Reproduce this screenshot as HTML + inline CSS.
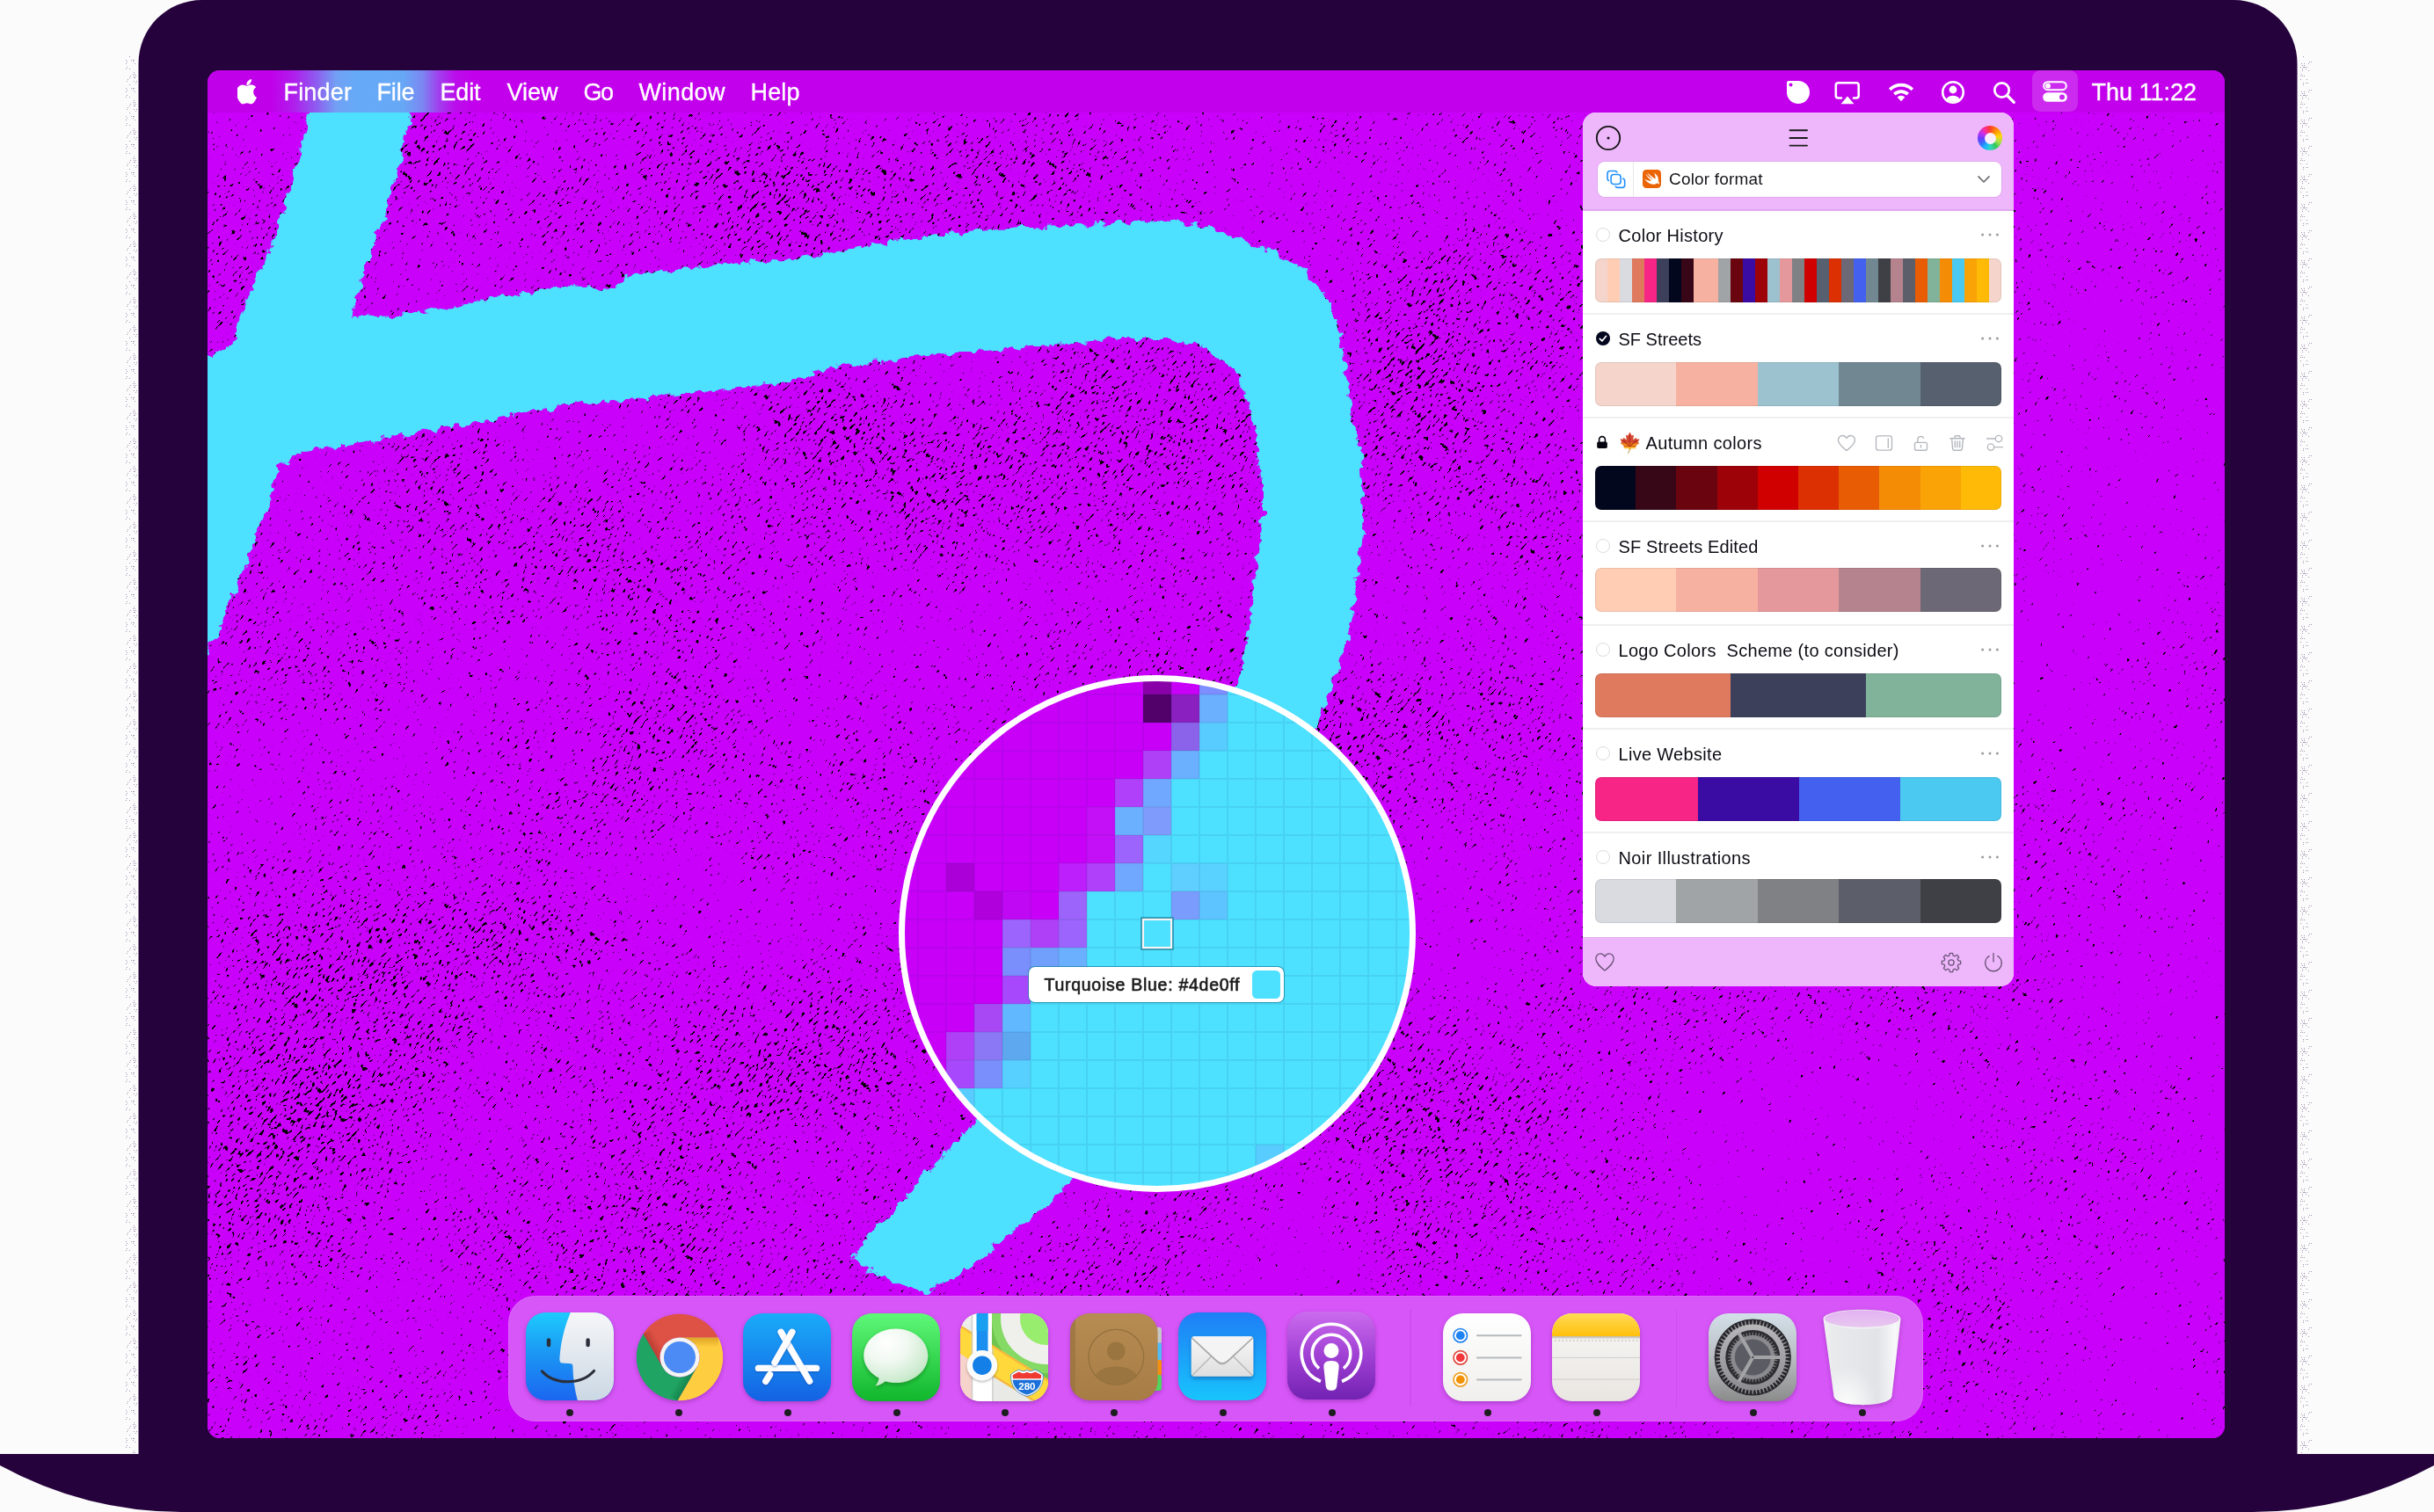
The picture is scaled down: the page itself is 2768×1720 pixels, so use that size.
<!DOCTYPE html>
<html lang="en"><head><meta charset="utf-8"><title>Color picker desktop</title>
<style>
*{box-sizing:border-box}
html,body{margin:0;padding:0}
body{width:2768px;height:1720px;position:relative;overflow:hidden;background:#fbfbfc;font-family:"Liberation Sans",sans-serif;}
.abs{position:absolute}
#screen{position:absolute;left:236px;top:80px;width:2294px;height:1556px;border-radius:14px;overflow:hidden;background:#c900fa}
#in{position:absolute;left:-236px;top:-80px;width:2768px;height:1720px;will-change:transform}
.mi{top:90px;height:30px;line-height:30px;font-size:27px;color:#fff;white-space:nowrap;-webkit-text-stroke:0.300px #fff}
.bar{border-radius:7px;box-shadow:inset 0 0 0 1px rgba(0,0,0,0.08)}
.tt{height:24px;line-height:24px;font-size:20px;color:#0c0c14;white-space:nowrap}
.ic{overflow:visible;filter:drop-shadow(0 2px 2.500px rgba(60,0,90,0.280))}
</style></head><body>
<svg class="abs" style="left:0;top:0" width="2768" height="1720" viewBox="0 0 2768 1720"><path fill="#26023c" d="M157.5,1654 L157.5,72 A72,72 0 0 1 229.5,0 L2540.5,0 A72,72 0 0 1 2612.5,72 L2612.5,1654 L2768,1654 L2768,1667 A435,435 0 0 1 2558,1720 L210,1720 A435,435 0 0 1 0,1667 L0,1654 Z"/></svg>
<svg class="abs" style="left:0;top:0" width="2768" height="1720" viewBox="0 0 2768 1720"><defs><pattern id="dl" x="140" y="0" width="16" height="32" patternUnits="userSpaceOnUse"><g fill="#a898b2"><rect x="3" y="4" width="1" height="1"/><rect x="3" y="8" width="1" height="1"/><rect x="3" y="14" width="1" height="1"/><rect x="4" y="6" width="1" height="1"/><rect x="4" y="12" width="1" height="1"/><rect x="4" y="28" width="1" height="1"/><rect x="5" y="26" width="1" height="1"/><rect x="7" y="0" width="1" height="1"/><rect x="7" y="14" width="1" height="1"/><rect x="7" y="24" width="1" height="1"/><rect x="8" y="22" width="1" height="1"/><rect x="9" y="4" width="1" height="1"/><rect x="11" y="4" width="1" height="1"/><rect x="11" y="6" width="1" height="1"/><rect x="11" y="20" width="1" height="1"/><rect x="12" y="4" width="1" height="1"/><rect x="12" y="18" width="1" height="1"/><rect x="12" y="22" width="1" height="1"/><rect x="12" y="24" width="1" height="1"/><rect x="12" y="28" width="1" height="1"/><rect x="13" y="8" width="1" height="1"/><rect x="13" y="20" width="1" height="1"/><rect x="13" y="24" width="1" height="1"/><rect x="14" y="22" width="1" height="1"/><rect x="14" y="30" width="1" height="1"/><rect x="15" y="28" width="1" height="1"/></g></pattern><pattern id="dr" x="2615" y="0" width="16" height="32" patternUnits="userSpaceOnUse"><g fill="#a898b2"><rect x="13" y="6" width="1" height="1"/><rect x="11" y="6" width="1" height="1"/><rect x="10" y="8" width="1" height="1"/><rect x="10" y="16" width="1" height="1"/><rect x="9" y="30" width="1" height="1"/><rect x="8" y="12" width="1" height="1"/><rect x="8" y="26" width="1" height="1"/><rect x="7" y="14" width="1" height="1"/><rect x="7" y="30" width="1" height="1"/><rect x="6" y="12" width="1" height="1"/><rect x="5" y="8" width="1" height="1"/><rect x="5" y="10" width="1" height="1"/><rect x="5" y="12" width="1" height="1"/><rect x="5" y="22" width="1" height="1"/><rect x="4" y="0" width="1" height="1"/><rect x="4" y="12" width="1" height="1"/><rect x="4" y="30" width="1" height="1"/><rect x="3" y="10" width="1" height="1"/><rect x="3" y="14" width="1" height="1"/><rect x="3" y="16" width="1" height="1"/><rect x="3" y="22" width="1" height="1"/><rect x="2" y="8" width="1" height="1"/><rect x="2" y="20" width="1" height="1"/><rect x="1" y="12" width="1" height="1"/><rect x="1" y="22" width="1" height="1"/><rect x="1" y="26" width="1" height="1"/></g></pattern></defs><rect x="140" y="64" width="16" height="1590" fill="url(#dl)"/><rect x="2615" y="64" width="16" height="1590" fill="url(#dr)"/></svg>
<div id="screen"><div id="in">

<svg class="wall" viewBox="236 80 2294 1556" width="2294" height="1556" style="position:absolute;left:236px;top:80px">
<defs>
<filter id="rough" x="-5%" y="-5%" width="110%" height="110%" filterUnits="objectBoundingBox">
<feTurbulence type="fractalNoise" baseFrequency="0.09" numOctaves="3" seed="4" result="n"/>
<feDisplacementMap in="SourceGraphic" in2="n" scale="14" xChannelSelector="R" yChannelSelector="G"/>
</filter>
<filter id="speck" x="-100" y="-700" width="2966" height="3116" filterUnits="userSpaceOnUse" color-interpolation-filters="sRGB">
<feTurbulence type="fractalNoise" baseFrequency="0.15 0.34" numOctaves="2" seed="11" result="t"/>
<feColorMatrix in="t" type="matrix" values="1 0 0 0 0  0 0 0 0 0  0 0 0 0 0  0 0 0 0 1" result="hi"/>
<feTurbulence type="fractalNoise" baseFrequency="0.0045 0.0045" numOctaves="3" seed="5" result="u"/>
<feColorMatrix in="u" type="matrix" values="1 0 0 0 0  0 0 0 0 0  0 0 0 0 0  0 0 0 0 1" result="lo"/>
<feComposite in="hi" in2="lo" operator="arithmetic" k1="0" k2="1" k3="0.16" k4="0" result="mix1"/>
<feGaussianBlur in="SourceGraphic" stdDeviation="42" result="D"/>
<feComposite in="mix1" in2="D" operator="arithmetic" k1="0" k2="1" k3="-0.13" k4="0.13" result="mix2"/>
<feColorMatrix in="mix2" type="matrix" values="0 0 0 0 0  0 0 0 0 0  0 0 0 0 0  -22 0 0 0 10.22"/>
</filter>
<filter id="speck2" x="0" y="0" width="100%" height="100%" filterUnits="objectBoundingBox" color-interpolation-filters="sRGB">
<feTurbulence type="fractalNoise" baseFrequency="0.012" numOctaves="2" seed="3" result="t"/>
<feColorMatrix in="t" type="matrix" values="0 0 0 0 0  0 0 0 0 0  0 0 0 0 0  0 9 0 0 -3.9"/>
</filter>
<mask id="mk" maskUnits="userSpaceOnUse" x="236" y="80" width="2294" height="1556">
<rect x="236" y="80" width="2294" height="1556" fill="#fff"/>
<path d="M368,60 L483,60 L455,185 L435,251 L413,316 L399,362 L457,358 L509,349 L579,336 L649,325 L701,328 L710,313 L762,308 L815,301 L885,296 L930,290 L987,279 L1075,266 L1162,259 L1249,255 L1315,250 L1380,259 L1415,276 L1450,287 L1485,309 L1511,340 L1524,383 L1531,427 L1539,471 L1548,527 L1550,593 L1544,658 L1533,724 L1520,767 L1504,811 L1480,870 L1400,1100 L1260,1300 L1218,1343 L1204,1356 L1188,1376 L1167,1390 L1147,1403 L1126,1423 L1105,1440 L1081,1456 L1052,1472 L1003,1452 L967,1434 L992,1401 L1023,1368 L1054,1333 L1085,1302 L1108,1277 L1200,1150 L1330,900 L1411,767 L1419,724 L1426,680 L1430,636 L1435,593 L1435,549 L1428,497 L1419,453 L1402,418 L1371,396 L1328,385 L1271,385 L1184,394 L1096,401 L1009,410 L944,418 L900,433 L841,441 L754,452 L666,458 L601,469 L536,482 L474,491 L405,506 L344,513 L317,530 L304,578 L287,622 L269,670 L254,705 L236,740 L220,760 L220,399 L243,404 L265,390 L282,338 L306,290 L324,233 L337,190Z" fill="#000" filter="url(#rough)"/>
</mask>
</defs>
<rect x="236" y="80" width="2294" height="1556" fill="#c900fa"/>
<g mask="url(#mk)">
<g transform="rotate(-48 1383 858)" filter="url(#speck)"><g transform="rotate(48 1383 858)"><rect x="-600" y="-900" width="4000" height="3600" fill="#787878"/><ellipse cx="986" cy="540" rx="500" ry="120" transform="rotate(-8 986 540)" fill="#bdbdbd"/><ellipse cx="540" cy="1240" rx="360" ry="250" fill="#b2b2b2"/><ellipse cx="930" cy="200" rx="470" ry="80" fill="#adadad"/><ellipse cx="1670" cy="600" rx="120" ry="420" fill="#949494"/><ellipse cx="1650" cy="1250" rx="260" ry="130" fill="#8f8f8f"/><ellipse cx="700" cy="830" rx="330" ry="130" fill="#5c5c5c"/><rect x="2290" y="80" width="300" height="1600" fill="#292929"/><rect x="1900" y="1130" width="700" height="600" fill="#3d3d3d"/><ellipse cx="1250" cy="1560" rx="600" ry="90" fill="#4c4c4c"/></g></g>
</g>
<path d="M368,60 L483,60 L455,185 L435,251 L413,316 L399,362 L457,358 L509,349 L579,336 L649,325 L701,328 L710,313 L762,308 L815,301 L885,296 L930,290 L987,279 L1075,266 L1162,259 L1249,255 L1315,250 L1380,259 L1415,276 L1450,287 L1485,309 L1511,340 L1524,383 L1531,427 L1539,471 L1548,527 L1550,593 L1544,658 L1533,724 L1520,767 L1504,811 L1480,870 L1400,1100 L1260,1300 L1218,1343 L1204,1356 L1188,1376 L1167,1390 L1147,1403 L1126,1423 L1105,1440 L1081,1456 L1052,1472 L1003,1452 L967,1434 L992,1401 L1023,1368 L1054,1333 L1085,1302 L1108,1277 L1200,1150 L1330,900 L1411,767 L1419,724 L1426,680 L1430,636 L1435,593 L1435,549 L1428,497 L1419,453 L1402,418 L1371,396 L1328,385 L1271,385 L1184,394 L1096,401 L1009,410 L944,418 L900,433 L841,441 L754,452 L666,458 L601,469 L536,482 L474,491 L405,506 L344,513 L317,530 L304,578 L287,622 L269,670 L254,705 L236,740 L220,760 L220,399 L243,404 L265,390 L282,338 L306,290 L324,233 L337,190Z" fill="#4de0ff" filter="url(#rough)"/>
</svg>
<div class="abs" id="menubar" style="left:236px;top:80px;width:2294px;height:48px;background:linear-gradient(90deg,#c100ea 0px,#c100ea 72px,#b01eec 98px,#8d5df0 124px,#72a0f4 146px,#66aaf6 168px,#67a8f6 222px,#7a88f2 244px,#9f42ee 262px,#bb0deb 282px,#c200ec 304px,#c200ec 100%)"></div>
<div class="abs mi" style="left:322.5px;letter-spacing:0.19px">Finder</div>
<div class="abs mi" style="left:428.5px;letter-spacing:-0.17px">File</div>
<div class="abs mi" style="left:500.5px;letter-spacing:-0.18px">Edit</div>
<div class="abs mi" style="left:576.5px;letter-spacing:-0.01px">View</div>
<div class="abs mi" style="left:663.5px;letter-spacing:-1.52px">Go</div>
<div class="abs mi" style="left:726.5px;letter-spacing:0.39px">Window</div>
<div class="abs mi" style="left:853.5px;letter-spacing:0.16px">Help</div>
<div class="abs mi" style="left:2378.5px;letter-spacing:-0.01px">Thu 11:22</div>
<svg class="abs" style="left:269.800px;top:89.500px" width="24.200" height="30" viewBox="0 0 170 200" preserveAspectRatio="none"><path fill="#fff" d="M150.4 146.7c-2.9 6.7-6.3 12.9-10.3 18.6-5.4 7.7-9.9 13.1-13.3 16.1-5.3 4.9-11 7.4-17.1 7.5-4.4 0-9.7-1.2-15.8-3.8-6.2-2.5-11.8-3.8-17-3.8-5.4 0-11.3 1.2-17.5 3.8-6.2 2.5-11.3 3.9-15.1 4-5.9 0.3-11.7-2.3-17.500-7.800-3.700-3.200-8.400-8.800-13.900-16.700-6-8.400-10.900-18.100-14.700-29.200-4.100-12-6.200-23.600-6.200-34.800 0-12.900 2.800-24 8.400-33.300 4.400-7.500 10.200-13.400 17.500-17.700 7.300-4.300 15.200-6.500 23.700-6.700 4.600 0 10.700 1.400 18.300 4.300 7.600 2.800 12.500 4.300 14.600 4.300 1.600 0 7-1.700 16.200-5.100 8.700-3.100 16-4.400 22-3.900 16.300 1.300 28.500 7.700 36.600 19.300-14.500 8.800-21.700 21.100-21.600 36.900 0.100 12.300 4.600 22.500 13.300 30.600 4 3.800 8.400 6.700 13.300 8.700-1.100 3.100-2.200 6-3.400 8.900zM113.200 4c0 9.700-3.500 18.700-10.600 27.100-8.500 9.900-18.800 15.700-29.900 14.800-0.100-1.200-0.200-2.400-0.200-3.700 0-9.300 4-19.200 11.200-27.300 3.600-4.100 8.100-7.500 13.700-10.300 5.500-2.700 10.700-4.200 15.600-4.400 0.100 1.300 0.200 2.600 0.200 3.800z"/></svg>
<svg class="abs" style="left:2031px;top:91px" width="28" height="28" viewBox="0 0 28 28"><path fill="#fff" d="M1 3 Q1 1 3 1 L14 1 A13 13 0 1 1 1 14 Z"/><circle cx="5.5" cy="5.5" r="2" fill="#c200ec"/></svg>
<svg class="abs" style="left:2085px;top:92px" width="32" height="28" viewBox="0 0 32 28"><path fill="none" stroke="#fff" stroke-width="2.6" stroke-linejoin="round" stroke-linecap="round" d="M9 19.500H5.500Q2.800 19.500 2.800 16.800V5Q2.800 2.300 5.500 2.300H26Q28.700 2.300 28.700 5V16.800Q28.700 19.500 26 19.500H23"/><path fill="#fff" d="M16 17.500 L23.500 26.300 H8.500Z"/></svg>
<svg class="abs" style="left:2146px;top:92px" width="32" height="26" viewBox="0 0 32 26"><g fill="none" stroke="#fff" stroke-width="3.700" stroke-linecap="butt"><path d="M3.200 9.800 A18.500 18.500 0 0 1 28.800 9.800"/><path d="M8.300 15.100 A11.200 11.200 0 0 1 23.700 15.100"/></g><path fill="#fff" d="M16 23.200 L11.600 18.600 A6.300 6.300 0 0 1 20.400 18.600Z"/></svg>
<svg class="abs" style="left:2207px;top:91px" width="28" height="28" viewBox="0 0 28 28"><defs><clipPath id="uc"><circle cx="14" cy="14" r="10.800"/></clipPath></defs><circle cx="14" cy="14" r="11.800" fill="none" stroke="#fff" stroke-width="2.500"/><circle cx="14" cy="11" r="4.400" fill="#fff"/><ellipse cx="14" cy="24.500" rx="8.600" ry="6.800" fill="#fff" clip-path="url(#uc)"/></svg>
<svg class="abs" style="left:2266px;top:92px" width="27" height="27" viewBox="0 0 27 27"><circle cx="10.500" cy="10.500" r="8.200" fill="none" stroke="#fff" stroke-width="2.800"/><path d="M16.500 16.500 L24.300 24.300" stroke="#fff" stroke-width="3.200" stroke-linecap="round"/></svg>
<div class="abs" style="left:2311px;top:80px;width:52px;height:47px;border-radius:9px;background:rgba(255,255,255,0.17)"></div>
<svg class="abs" style="left:2322px;top:91px" width="30" height="26" viewBox="0 0 30 26"><rect x="2.200" y="2.200" width="25.600" height="9" rx="4.500" fill="none" stroke="#fff" stroke-width="2"/><circle cx="7" cy="6.700" r="2.900" fill="#fff"/><rect x="1.200" y="14.200" width="27.600" height="10.600" rx="5.300" fill="#fff"/><circle cx="23" cy="19.500" r="3" fill="#c92af0"/></svg>
<div class="abs" id="panel" style="left:1800px;top:128px;width:490px;height:994px;border-radius:15px;background:#fff;overflow:hidden"></div>
<div class="abs" style="left:1800px;top:128px;width:490px;height:112px;background:#eeb7fb;border-radius:15px 15px 0 0;border-bottom:2px solid #dfa9ee"></div>
<div class="abs" style="left:1800px;top:1066px;width:490px;height:56px;background:#eeb7fb;border-radius:0 0 15px 15px;border-top:1px solid #e3aef1"></div>
<svg class="abs" style="left:1813px;top:141px" width="32" height="32" viewBox="0 0 32 32"><circle cx="16" cy="16" r="13.200" fill="none" stroke="#111" stroke-width="1.800"/><circle cx="16" cy="16" r="1.500" fill="#111"/></svg>
<svg class="abs" style="left:2033px;top:145px" width="24" height="24" viewBox="0 0 24 24"><path d="M2.500 3.300H22M2.500 12H22M2.500 20.600H22" stroke="#1a1a1a" stroke-width="1.900" stroke-linecap="round"/></svg>
<div class="abs" style="left:2249px;top:143px;width:28px;height:28px;border-radius:50%;background:conic-gradient(from 0deg,#ff3b30,#ff9500 12%,#ffd60a 22%,#a4e04a 32%,#34c759 40%,#30d5c8 50%,#19b5fe 58%,#3a6bff 66%,#6a3dff 74%,#c030f0 83%,#ff2d92 92%,#ff3b30)"></div>
<div class="abs" style="left:2256.500px;top:150.500px;width:13px;height:13px;border-radius:50%;background:#fbeefe"></div>
<div class="abs" style="left:1816px;top:183px;width:461px;height:42px;border-radius:9px;background:#e2a9ee"></div>
<div class="abs" style="left:1817px;top:184px;width:459px;height:40px;border-radius:8px;background:#fff"></div>
<div class="abs" style="left:1857px;top:184px;width:1px;height:40px;background:#ebe8e8"></div>
<svg class="abs" style="left:1826px;top:192px" width="24" height="24" viewBox="0 0 24 24"><g fill="none" stroke="#2190fb" stroke-width="1.600"><rect x="2" y="2.500" width="11.200" height="11.200" rx="3"/><rect x="11" y="11" width="10.700" height="10.400" rx="3"/><rect x="6.100" y="6.500" width="11" height="11" rx="3" fill="#fff" stroke="#fff" stroke-width="4"/><rect x="6.100" y="6.500" width="11" height="11" rx="3" fill="#fff"/></g></svg>
<svg class="abs" style="left:1868px;top:193px" width="21" height="21" viewBox="0 0 21 21"><defs><linearGradient id="sw" x1="0" y1="0" x2="0" y2="1"><stop offset="0" stop-color="#f88a36"/><stop offset="1" stop-color="#fd2020"/></linearGradient></defs><rect width="21" height="21" rx="4.400" fill="#eb6404"/><path fill="#fff" transform="translate(10.600 10.300) scale(1.200) translate(-10.500 -11.200)" d="M4 6.300C6.500 8.700 9.300 10.800 11.700 12.300C9.300 10.100 7 7.300 5.800 5.300C8.300 7.700 11.300 10 13.700 11.400C13.900 10.400 14 8.300 12.400 5.600C15.400 7.500 17.300 10.700 16.500 13.500C17.700 14.900 17.700 16.300 17.500 16.700C16.800 15.500 15.700 15.500 15.100 15.800C13.500 16.700 11.400 17 9 16C6.500 15 4.500 13 3.400 11.200C5.300 12.600 7.800 13.700 10 13.100C8 11.500 5.700 9 4 6.300Z"/></svg>
<div class="abs" style="left:1898px;top:193px;height:22px;line-height:22px;font-size:19px;color:#15151a;white-space:nowrap;letter-spacing:0.18px">Color format</div>
<svg class="abs" style="left:2248px;top:198px" width="16" height="12" viewBox="0 0 16 12"><path d="M2 2.800L8 9L14 2.800" fill="none" stroke="#6e6e73" stroke-width="1.700" stroke-linecap="round" stroke-linejoin="round"/></svg>
<div class="abs" style="left:1800px;top:356px;width:490px;height:2px;background:#efeff0"></div>
<div class="abs" style="left:1800px;top:474px;width:490px;height:2px;background:#efeff0"></div>
<div class="abs" style="left:1800px;top:592px;width:490px;height:2px;background:#efeff0"></div>
<div class="abs" style="left:1800px;top:710px;width:490px;height:2px;background:#efeff0"></div>
<div class="abs" style="left:1800px;top:828px;width:490px;height:2px;background:#efeff0"></div>
<div class="abs" style="left:1800px;top:946px;width:490px;height:2px;background:#efeff0"></div>
<div class="abs" style="left:1815px;top:259px;width:16px;height:16px;border-radius:50%;border:1.500px solid #dcdcde;background:#fff"></div>
<div class="abs tt" style="left:1840.5px;top:255.5px;letter-spacing:0.29px">Color History</div>
<svg class="abs" style="left:2252px;top:264px" width="22" height="6" viewBox="0 0 22 6"><circle cx="2.600" cy="3" r="1.500" fill="#9a9aa0"/><circle cx="11" cy="3" r="1.500" fill="#9a9aa0"/><circle cx="19.400" cy="3" r="1.500" fill="#9a9aa0"/></svg>
<div class="abs bar" style="left:1814px;top:294px;width:462px;height:50px;background:linear-gradient(90deg,#f5d5cb 0.00px,#f5d5cb 14.00px,#fecdb4 14.00px,#fecdb4 28.00px,#dadbe0 28.00px,#dadbe0 42.00px,#df7a5e 42.00px,#df7a5e 56.00px,#f72585 56.00px,#f72585 70.00px,#3d405b 70.00px,#3d405b 84.00px,#03071e 84.00px,#03071e 98.00px,#370617 98.00px,#370617 112.00px,#f7b1a0 112.00px,#f7b1a0 126.00px,#f7b1a0 126.00px,#f7b1a0 140.00px,#a0a4a6 140.00px,#a0a4a6 154.00px,#6a040f 154.00px,#6a040f 168.00px,#3a0ca3 168.00px,#3a0ca3 182.00px,#9d0208 182.00px,#9d0208 196.00px,#9cc2cf 196.00px,#9cc2cf 210.00px,#e5989b 210.00px,#e5989b 224.00px,#808184 224.00px,#808184 238.00px,#d00000 238.00px,#d00000 252.00px,#56606e 252.00px,#56606e 266.00px,#dc2f02 266.00px,#dc2f02 280.00px,#6d6875 280.00px,#6d6875 294.00px,#4361ee 294.00px,#4361ee 308.00px,#718893 308.00px,#718893 322.00px,#3f3f46 322.00px,#3f3f46 336.00px,#b5838d 336.00px,#b5838d 350.00px,#5c5f69 350.00px,#5c5f69 364.00px,#e85d04 364.00px,#e85d04 378.00px,#81b29a 378.00px,#81b29a 392.00px,#f48c06 392.00px,#f48c06 406.00px,#4cc9f0 406.00px,#4cc9f0 420.00px,#faa307 420.00px,#faa307 434.00px,#ffba08 434.00px,#ffba08 448.00px,#f5d5cb 448.00px,#f5d5cb 462.00px)"></div>
<svg class="abs" style="left:1815px;top:377px" width="16" height="16" viewBox="0 0 16 16"><circle cx="8" cy="8" r="8" fill="#03071e"/><path d="M4.300 8.400L6.900 10.900L11.600 5.300" fill="none" stroke="#fff" stroke-width="1.700" stroke-linecap="round" stroke-linejoin="round"/></svg>
<div class="abs tt" style="left:1840.5px;top:373.5px;letter-spacing:0.00px">SF Streets</div>
<svg class="abs" style="left:2252px;top:382px" width="22" height="6" viewBox="0 0 22 6"><circle cx="2.600" cy="3" r="1.500" fill="#9a9aa0"/><circle cx="11" cy="3" r="1.500" fill="#9a9aa0"/><circle cx="19.400" cy="3" r="1.500" fill="#9a9aa0"/></svg>
<div class="abs bar" style="left:1814px;top:412px;width:462px;height:50px;background:linear-gradient(90deg,#f5d5cb 0.00px,#f5d5cb 92.40px,#f7b1a0 92.40px,#f7b1a0 184.80px,#9cc2cf 184.80px,#9cc2cf 277.20px,#718893 277.20px,#718893 369.60px,#56606e 369.60px,#56606e 462.00px)"></div>
<svg class="abs" style="left:1815px;top:495px" width="14" height="16" viewBox="0 0 14 16"><path d="M3.600 8V5a3.400 3.400 0 0 1 6.800 0V8" fill="none" stroke="#05050f" stroke-width="1.600"/><rect x="1.200" y="7.600" width="11.600" height="7.300" rx="1.700" fill="#05050f"/></svg>
<div class="abs tt" style="left:1871.5px;top:491.5px;letter-spacing:0.35px">Autumn colors</div>
<svg class="abs" style="left:1841.5px;top:491.3px" width="23" height="25" viewBox="0 0 46 50"><defs><linearGradient id="lf" x1="0" y1="0" x2="0" y2="1"><stop offset="0" stop-color="#dc4a3a"/><stop offset="0.550" stop-color="#cf4a30"/><stop offset="0.700" stop-color="#f08a1c"/><stop offset="0.850" stop-color="#ffb41e"/><stop offset="1" stop-color="#ffd447"/></linearGradient></defs><path fill="url(#lf)" d="M23 1 L27.500 9 L32 7.500 L30.500 19 L37 13.500 L38.500 17.500 L45 16.500 L41.500 24 L44.500 26.500 L35 33.500 L37.500 38.500 L26 37 L24.500 41.500 L21.500 41.500 L20 37 L8.500 38.500 L11 33.500 L1.500 26.500 L4.500 24 L1 16.500 L7.500 17.500 L9 13.500 L15.500 19 L14 7.500 L18.500 9 Z"/><path d="M22.500 33 L22.500 8 M22 33 L8 20 M23.500 33 L38 20 M22 34 L9 33 M24 34 L37 33" stroke="#a30d0d" stroke-opacity="0.620" stroke-width="2.200" fill="none" stroke-linecap="round"/><path d="M16 36 L30 36 L34 39 L12 39Z" fill="#ffc83a" opacity="0.700"/><path d="M23.500 39 L19.500 49" stroke="#b98a3a" stroke-width="1.800" stroke-linecap="round"/></svg>
<svg class="abs" style="left:2089px;top:494px" width="22" height="20" viewBox="0 0 22 20"><path d="M11 18.500C6.500 15 1.500 11.300 1.500 6.600C1.500 3.700 3.700 1.500 6.300 1.500C8.300 1.500 10 2.700 11 4.500C12 2.700 13.700 1.500 15.700 1.500C18.300 1.500 20.500 3.700 20.500 6.600C20.500 11.300 15.500 15 11 18.500Z" fill="none" stroke="#b4b7bd" stroke-width="1.350" stroke-linejoin="round"/></svg>
<svg class="abs" style="left:2132px;top:494px" width="21" height="20" viewBox="0 0 21 20"><rect x="1.500" y="1.800" width="18" height="16.400" rx="2.800" fill="none" stroke="#b4b7bd" stroke-width="1.350"/><path d="M15.300 4.800V15.200" stroke="#b4b7bd" stroke-width="1.350" stroke-linecap="round"/></svg>
<svg class="abs" style="left:2175px;top:494px" width="19" height="20" viewBox="0 0 19 20"><rect x="2.500" y="9.300" width="14" height="8.900" rx="2" fill="none" stroke="#b4b7bd" stroke-width="1.350"/><path d="M5.800 9.300V6.200A3.700 3.700 0 0 1 12.600 4.200" fill="none" stroke="#b4b7bd" stroke-width="1.350" stroke-linecap="round"/><path d="M9.500 12.500V15" stroke="#b4b7bd" stroke-width="1.350" stroke-linecap="round"/></svg>
<svg class="abs" style="left:2216px;top:494px" width="20" height="20" viewBox="0 0 20 20"><path d="M1.800 4.800H18.200M7 4.600V3.300Q7 1.800 8.500 1.800H11.500Q13 1.800 13 3.300V4.600M3.600 4.800L4.600 16.200Q4.800 18.200 6.800 18.200H13.200Q15.200 18.200 15.400 16.200L16.400 4.800M7.300 8V14.800M10 8V14.800M12.700 8V14.800" fill="none" stroke="#b4b7bd" stroke-width="1.400" stroke-linecap="round" stroke-linejoin="round"/></svg>
<svg class="abs" style="left:2258px;top:494px" width="21" height="20" viewBox="0 0 21 20"><circle cx="15" cy="5" r="3.700" fill="none" stroke="#b4b7bd" stroke-width="1.350"/><path d="M1.500 5H11.500" stroke="#b4b7bd" stroke-width="1.350" stroke-linecap="round"/><circle cx="6" cy="14.600" r="3.700" fill="none" stroke="#b4b7bd" stroke-width="1.350"/><path d="M9.500 14.600H19.500" stroke="#b4b7bd" stroke-width="1.350" stroke-linecap="round"/></svg>
<div class="abs bar" style="left:1814px;top:530px;width:462px;height:50px;background:linear-gradient(90deg,#03071e 0.00px,#03071e 46.20px,#370617 46.20px,#370617 92.40px,#6a040f 92.40px,#6a040f 138.60px,#9d0208 138.60px,#9d0208 184.80px,#d00000 184.80px,#d00000 231.00px,#dc2f02 231.00px,#dc2f02 277.20px,#e85d04 277.20px,#e85d04 323.40px,#f48c06 323.40px,#f48c06 369.60px,#faa307 369.60px,#faa307 415.80px,#ffba08 415.80px,#ffba08 462.00px)"></div>
<div class="abs" style="left:1815px;top:613px;width:16px;height:16px;border-radius:50%;border:1.500px solid #dcdcde;background:#fff"></div>
<div class="abs tt" style="left:1840.5px;top:609.5px;letter-spacing:0.13px">SF Streets Edited</div>
<svg class="abs" style="left:2252px;top:618px" width="22" height="6" viewBox="0 0 22 6"><circle cx="2.600" cy="3" r="1.500" fill="#9a9aa0"/><circle cx="11" cy="3" r="1.500" fill="#9a9aa0"/><circle cx="19.400" cy="3" r="1.500" fill="#9a9aa0"/></svg>
<div class="abs bar" style="left:1814px;top:646px;width:462px;height:50px;background:linear-gradient(90deg,#fecdb4 0.00px,#fecdb4 92.40px,#f7b1a0 92.40px,#f7b1a0 184.80px,#e5989b 184.80px,#e5989b 277.20px,#b5838d 277.20px,#b5838d 369.60px,#6d6875 369.60px,#6d6875 462.00px)"></div>
<div class="abs" style="left:1815px;top:731px;width:16px;height:16px;border-radius:50%;border:1.500px solid #dcdcde;background:#fff"></div>
<div class="abs tt" style="left:1840.5px;top:727.5px;letter-spacing:0.31px">Logo Colors&nbsp; Scheme (to consider)</div>
<svg class="abs" style="left:2252px;top:736px" width="22" height="6" viewBox="0 0 22 6"><circle cx="2.600" cy="3" r="1.500" fill="#9a9aa0"/><circle cx="11" cy="3" r="1.500" fill="#9a9aa0"/><circle cx="19.400" cy="3" r="1.500" fill="#9a9aa0"/></svg>
<div class="abs bar" style="left:1814px;top:766px;width:462px;height:50px;background:linear-gradient(90deg,#df7a5e 0.00px,#df7a5e 154.00px,#3d405b 154.00px,#3d405b 308.00px,#81b29a 308.00px,#81b29a 462.00px)"></div>
<div class="abs" style="left:1815px;top:849px;width:16px;height:16px;border-radius:50%;border:1.500px solid #dcdcde;background:#fff"></div>
<div class="abs tt" style="left:1840.5px;top:845.5px;letter-spacing:0.31px">Live Website</div>
<svg class="abs" style="left:2252px;top:854px" width="22" height="6" viewBox="0 0 22 6"><circle cx="2.600" cy="3" r="1.500" fill="#9a9aa0"/><circle cx="11" cy="3" r="1.500" fill="#9a9aa0"/><circle cx="19.400" cy="3" r="1.500" fill="#9a9aa0"/></svg>
<div class="abs bar" style="left:1814px;top:884px;width:462px;height:50px;background:linear-gradient(90deg,#f72585 0.00px,#f72585 117.50px,#3a0ca3 117.50px,#3a0ca3 232.30px,#4361ee 232.30px,#4361ee 347.10px,#4cc9f0 347.10px,#4cc9f0 462.00px)"></div>
<div class="abs" style="left:1815px;top:967px;width:16px;height:16px;border-radius:50%;border:1.500px solid #dcdcde;background:#fff"></div>
<div class="abs tt" style="left:1840.5px;top:963.5px;letter-spacing:0.39px">Noir Illustrations</div>
<svg class="abs" style="left:2252px;top:972px" width="22" height="6" viewBox="0 0 22 6"><circle cx="2.600" cy="3" r="1.500" fill="#9a9aa0"/><circle cx="11" cy="3" r="1.500" fill="#9a9aa0"/><circle cx="19.400" cy="3" r="1.500" fill="#9a9aa0"/></svg>
<div class="abs bar" style="left:1814px;top:1000px;width:462px;height:50px;background:linear-gradient(90deg,#dadbe0 0.00px,#dadbe0 92.40px,#a0a4a6 92.40px,#a0a4a6 184.80px,#808184 184.80px,#808184 277.20px,#5c5f69 277.20px,#5c5f69 369.60px,#3f3f46 369.60px,#3f3f46 462.00px)"></div>
<svg class="abs" style="left:1813px;top:1083px" width="24" height="23" viewBox="0 0 24 23"><path d="M12 21C7 17 1.800 12.800 1.800 7.600C1.800 4.300 4.200 1.900 7 1.900C9.200 1.900 11 3.200 12 5.200C13 3.200 14.800 1.900 17 1.900C19.800 1.900 22.200 4.300 22.200 7.600C22.200 12.800 17 17 12 21Z" fill="none" stroke="#6b5378" stroke-width="1.300" stroke-linejoin="round"/></svg>
<svg class="abs" style="left:2207px;top:1083px" width="24" height="24" viewBox="0 0 24 24"><path d="M9.79,4.00 L10.39,1.32 L13.61,1.32 L14.21,4.00 L16.09,4.78 L18.41,3.31 L20.69,5.59 L19.22,7.91 L20.00,9.79 L22.68,10.39 L22.68,13.61 L20.00,14.21 L19.22,16.09 L20.69,18.41 L18.41,20.69 L16.09,19.22 L14.21,20.00 L13.61,22.68 L10.39,22.68 L9.79,20.00 L7.91,19.22 L5.59,20.69 L3.31,18.41 L4.78,16.09 L4.00,14.21 L1.32,13.61 L1.32,10.39 L4.00,9.79 L4.78,7.91 L3.31,5.59 L5.59,3.31 L7.91,4.78Z" fill="none" stroke="#6b5378" stroke-width="1.300" stroke-linejoin="round"/><circle cx="12" cy="12" r="3.100" fill="none" stroke="#6b5378" stroke-width="1.300"/></svg>
<svg class="abs" style="left:2255px;top:1083px" width="24" height="24" viewBox="0 0 24 24"><path d="M12 1.500V11" stroke="#6b5378" stroke-width="1.300" stroke-linecap="round" fill="none"/><path d="M7.200 4.500A9.300 9.300 0 1 0 16.800 4.500" stroke="#6b5378" stroke-width="1.300" stroke-linecap="round" fill="none"/></svg>
<svg class="abs" style="left:1016px;top:762px" width="600" height="600" viewBox="1016 762 600 600">
<defs><clipPath id="mc"><circle cx="1316" cy="1062" r="289"/></clipPath><pattern id="grid" x="1299" y="1045" width="32" height="32" patternUnits="userSpaceOnUse"><path d="M1 0V32M0 1H32" stroke="#002850" stroke-opacity="0.075" stroke-width="2" fill="none"/></pattern></defs>
<g clip-path="url(#mc)">
<rect x="1016" y="762" width="600" height="600" fill="#4de0ff"/>
<rect x="1012" y="758" width="288" height="32" fill="#c800f8"/>
<rect x="1300" y="758" width="32" height="32" fill="#8a00a8"/>
<rect x="1332" y="758" width="32" height="32" fill="#c800f8"/>
<rect x="1364" y="758" width="32" height="32" fill="#7e8eff"/>
<rect x="1012" y="790" width="288" height="32" fill="#c800f8"/>
<rect x="1300" y="790" width="32" height="32" fill="#52006a"/>
<rect x="1332" y="790" width="32" height="32" fill="#8a20c0"/>
<rect x="1364" y="790" width="32" height="32" fill="#6ab0ff"/>
<rect x="1012" y="822" width="320" height="32" fill="#c800f8"/>
<rect x="1332" y="822" width="32" height="32" fill="#8b62ea"/>
<rect x="1364" y="822" width="32" height="32" fill="#58ccff"/>
<rect x="1012" y="854" width="288" height="32" fill="#c800f8"/>
<rect x="1300" y="854" width="32" height="32" fill="#b040f8"/>
<rect x="1332" y="854" width="32" height="32" fill="#6ab0ff"/>
<rect x="1012" y="886" width="256" height="32" fill="#c800f8"/>
<rect x="1268" y="886" width="32" height="32" fill="#b040fa"/>
<rect x="1300" y="886" width="32" height="32" fill="#70a8ff"/>
<rect x="1012" y="918" width="256" height="32" fill="#c800f8"/>
<rect x="1236" y="918" width="32" height="32" fill="#c410f6"/>
<rect x="1268" y="918" width="32" height="32" fill="#6ab0ff"/>
<rect x="1300" y="918" width="32" height="32" fill="#7f9cfc"/>
<rect x="1012" y="950" width="256" height="32" fill="#c800f8"/>
<rect x="1236" y="950" width="32" height="32" fill="#c410f6"/>
<rect x="1268" y="950" width="32" height="32" fill="#9c64fc"/>
<rect x="1300" y="950" width="32" height="32" fill="#54d6ff"/>
<rect x="1012" y="982" width="192" height="32" fill="#c800f8"/>
<rect x="1076" y="982" width="32" height="32" fill="#ac00d8"/>
<rect x="1204" y="982" width="32" height="32" fill="#bd1efc"/>
<rect x="1236" y="982" width="32" height="32" fill="#b040fa"/>
<rect x="1268" y="982" width="32" height="32" fill="#70a8ff"/>
<rect x="1332" y="982" width="32" height="32" fill="#5ecfff"/>
<rect x="1364" y="982" width="32" height="32" fill="#5ad2ff"/>
<rect x="1012" y="1014" width="192" height="32" fill="#c800f8"/>
<rect x="1108" y="1014" width="32" height="32" fill="#b000dc"/>
<rect x="1140" y="1014" width="32" height="32" fill="#c008f4"/>
<rect x="1204" y="1014" width="32" height="32" fill="#9c64fa"/>
<rect x="1332" y="1014" width="32" height="32" fill="#7a9cfc"/>
<rect x="1364" y="1014" width="32" height="32" fill="#5ec4ff"/>
<rect x="1012" y="1046" width="128" height="32" fill="#c800f8"/>
<rect x="1140" y="1046" width="32" height="32" fill="#9c64fc"/>
<rect x="1172" y="1046" width="32" height="32" fill="#b040f8"/>
<rect x="1204" y="1046" width="32" height="32" fill="#9c64fc"/>
<rect x="1012" y="1078" width="128" height="32" fill="#c800f8"/>
<rect x="1140" y="1078" width="32" height="32" fill="#7a8ffc"/>
<rect x="1172" y="1078" width="32" height="32" fill="#70a0fc"/>
<rect x="1204" y="1078" width="32" height="32" fill="#6ab0ff"/>
<rect x="1012" y="1110" width="128" height="32" fill="#c800f8"/>
<rect x="1140" y="1110" width="32" height="32" fill="#a848fc"/>
<rect x="1012" y="1142" width="96" height="32" fill="#c800f8"/>
<rect x="1108" y="1142" width="32" height="32" fill="#a848f4"/>
<rect x="1140" y="1142" width="32" height="32" fill="#62b8ff"/>
<rect x="1012" y="1174" width="64" height="32" fill="#c800f8"/>
<rect x="1076" y="1174" width="32" height="32" fill="#b040f8"/>
<rect x="1108" y="1174" width="32" height="32" fill="#8a78f4"/>
<rect x="1140" y="1174" width="32" height="32" fill="#5ea8f0"/>
<rect x="1012" y="1206" width="64" height="32" fill="#c800f8"/>
<rect x="1076" y="1206" width="32" height="32" fill="#a848fc"/>
<rect x="1108" y="1206" width="32" height="32" fill="#7a8ffc"/>
<rect x="1140" y="1206" width="32" height="32" fill="#58d0ff"/>
<rect x="1076" y="1238" width="32" height="32" fill="#58ccff"/>
<rect x="1428" y="1302" width="32" height="32" fill="#58ccff"/>
<rect x="1016" y="762" width="600" height="600" fill="url(#grid)"/>
</g>
<circle cx="1316" cy="1062" r="290.500" fill="none" stroke="#fff" stroke-width="7"/>
<rect x="1298" y="1044" width="36" height="36" fill="none" stroke="#2f93ae" stroke-width="1.700"/>
<rect x="1300" y="1046" width="32" height="32" fill="none" stroke="#fbf3f3" stroke-width="2.100"/>
</svg>
<div class="abs" style="left:1169px;top:1099px;width:292px;height:42px;border-radius:8px;background:rgba(20,125,155,0.700)"></div>
<div class="abs" style="left:1170px;top:1100px;width:290px;height:40px;border-radius:7px;background:#fff"></div>
<div class="abs" style="left:1187.500px;top:1108.500px;height:22px;line-height:22px;font-size:19.500px;font-weight:normal;-webkit-text-stroke:0.650px #1c1c1e;color:#1c1c1e;white-space:nowrap;letter-spacing:0.73px">Turquoise Blue: #4de0ff</div>
<div class="abs" style="left:1424px;top:1104px;width:32px;height:32px;border-radius:5.500px;background:#4de0ff"></div>
<div class="abs" style="left:578px;top:1474px;width:1609px;height:143px;border-radius:31px;background:#d756f7;box-shadow:inset 0 0 0 1px rgba(255,255,255,0.10)"></div>
<div class="abs" style="left:1603px;top:1490px;width:1.500px;height:110px;background:rgba(110,0,150,0.09)"></div>
<div class="abs" style="left:1905.500px;top:1490px;width:1.500px;height:110px;background:rgba(110,0,150,0.09)"></div>
<svg class="abs ic" style="left:597.5px;top:1493px" width="100" height="100" viewBox="0 0 100 100" ><defs><clipPath id="cfi"><rect width="100" height="100" rx="22.500"/></clipPath><linearGradient id="fb" x1="0" y1="0" x2="0" y2="1"><stop offset="0" stop-color="#1ecbfd"/><stop offset="0.450" stop-color="#1b98f4"/><stop offset="1" stop-color="#1b66f0"/></linearGradient><linearGradient id="fw" x1="0" y1="0" x2="0" y2="1"><stop offset="0" stop-color="#f6f6f8"/><stop offset="1" stop-color="#cbd8e4"/></linearGradient></defs>
<g clip-path="url(#cfi)"><rect width="100" height="100" fill="url(#fb)"/>
<path fill="url(#fw)" d="M50.800 0 C44 16 39.500 34 38.400 52 Q38.200 57.200 41 57.500 L51.500 58.300 Q53.400 58.600 53.400 61 C53.600 75 55.500 88 58.800 100 L100 100 L100 0Z"/>
<rect x="23.800" y="29.300" width="4.400" height="10" rx="2.200" fill="#2b2f3a"/><rect x="68.400" y="29.300" width="4.400" height="10" rx="2.200" fill="#2b2f3a"/>
<path d="M18.500 67 C32 82.500 63 83 77.500 66.500" fill="none" stroke="#2b2f3a" stroke-width="3.100" stroke-linecap="round"/></g></svg>
<svg class="abs ic" style="left:722.5px;top:1493.8px" width="100" height="100" viewBox="-50 -50 100 100"><defs><linearGradient id="chs0" gradientUnits="userSpaceOnUse" x1="0.00" y1="-22.48" x2="0.00" y2="-11.48"><stop offset="0" stop-color="#b06a00" stop-opacity="0.420"/><stop offset="1" stop-color="#b06a00" stop-opacity="0"/></linearGradient><linearGradient id="chs1" gradientUnits="userSpaceOnUse" x1="19.47" y1="11.24" x2="9.94" y2="5.74"><stop offset="0" stop-color="#075c30" stop-opacity="0.420"/><stop offset="1" stop-color="#075c30" stop-opacity="0"/></linearGradient><linearGradient id="chs2" gradientUnits="userSpaceOnUse" x1="-19.47" y1="11.24" x2="-9.94" y2="5.74"><stop offset="0" stop-color="#8e2216" stop-opacity="0.420"/><stop offset="1" stop-color="#8e2216" stop-opacity="0"/></linearGradient><clipPath id="chc"><circle r="49.4"/></clipPath></defs><g clip-path="url(#chc)"><path d="M-41.46,-26.86 A49.4,49.4 0 0 1 43.99,-22.48 L0.00,-22.48 A22.48,22.48 0 0 0 -19.47,11.24Z" fill="#de5246"/><path d="M43.99,-22.48 A49.4,49.4 0 0 1 -2.53,49.34 L19.47,11.24 A22.48,22.48 0 0 0 0.00,-22.48Z" fill="#ffcd40"/><path d="M-2.53,49.34 A49.4,49.4 0 0 1 -41.46,-26.86 L-19.47,11.24 A22.48,22.48 0 0 0 19.47,11.24Z" fill="#1fa463"/><path d="M0.00,-22.48 L43.99,-22.48 L43.99,-11.48 L0.00,-11.48Z" fill="url(#chs0)"/><path d="M19.47,11.24 L-2.53,49.34 L-12.06,43.84 L9.94,5.74Z" fill="url(#chs1)"/><path d="M-19.47,11.24 L-41.46,-26.86 L-31.93,-32.36 L-9.94,5.74Z" fill="url(#chs2)"/><circle r="22.48" fill="#f4f4f4"/><circle r="18.03" fill="#4c8bf5"/></g></svg>
<svg class="abs ic" style="left:845.3px;top:1493.5px" width="100" height="100" viewBox="0 0 100 100" ><defs><clipPath id="cas"><rect width="100" height="100" rx="22.500"/></clipPath><linearGradient id="asb" x1="0" y1="0" x2="0" y2="1"><stop offset="0" stop-color="#1aacf9"/><stop offset="1" stop-color="#1462e3"/></linearGradient><filter id="ash" filterUnits="userSpaceOnUse" x="0" y="0" width="100" height="100"><feDropShadow dx="0" dy="1" stdDeviation="0.900" flood-color="#0a3c9c" flood-opacity="0.550"/></filter></defs>
<rect width="100" height="100" rx="22.500" fill="url(#asb)"/>
<g stroke="#fdfdff" stroke-width="7.400" stroke-linecap="round" fill="none">
<path filter="url(#ash)" d="M17.500 62.400 L83.500 62.400"/><path filter="url(#ash)" d="M30.500 69.700 L25.800 77.300"/><path filter="url(#ash)" d="M43.200 21.300 L75.600 77"/><path filter="url(#ash)" d="M55.800 21.300 L36 56"/></g></svg>
<svg class="abs ic" style="left:969.2px;top:1493.5px" width="100" height="100" viewBox="0 0 100 100" ><defs><linearGradient id="msb" x1="0" y1="0" x2="0" y2="1"><stop offset="0" stop-color="#5ff878"/><stop offset="1" stop-color="#10b62c"/></linearGradient><radialGradient id="msw" cx="0.350" cy="0.250" r="0.900"><stop offset="0" stop-color="#ffffff"/><stop offset="0.380" stop-color="#f0f8f0"/><stop offset="0.750" stop-color="#cdebd0"/><stop offset="1" stop-color="#9fdea6"/></radialGradient><filter id="msh" x="-20%" y="-20%" width="140%" height="150%"><feDropShadow dx="0" dy="2.500" stdDeviation="2.200" flood-color="#0a7a1c" flood-opacity="0.600"/></filter></defs>
<rect width="100" height="100" rx="22.500" fill="url(#msb)"/>
<path filter="url(#msh)" fill="url(#msw)" d="M49.800 17.400 C70 17.400 86.300 31.200 86.300 48.200 C86.300 65.200 70 79 49.800 79 C45.500 79 41.400 78.400 37.600 77.200 C34.500 80.200 30.500 82 26.500 82.500 C29 79.800 30.300 76.500 30.600 73.600 C20.200 68.100 13.300 58.800 13.300 48.200 C13.300 31.200 29.600 17.400 49.800 17.400Z"/></svg>
<svg class="abs ic" style="left:1092.4px;top:1493.5px" width="100" height="100" viewBox="0 0 100 100" ><defs><clipPath id="cmp"><rect width="100" height="100" rx="22.500"/></clipPath><filter id="mpsh" x="-30%" y="-30%" width="160%" height="160%"><feDropShadow dx="0" dy="1.500" stdDeviation="1.500" flood-color="#000" flood-opacity="0.300"/></filter></defs>
<g clip-path="url(#cmp)"><rect width="100" height="100" fill="#ebebe8"/>
<rect x="36" y="0" width="64" height="100" fill="#7ed45e"/>
<circle cx="98" cy="6" r="70" fill="#6ec44e"/><circle cx="98" cy="6" r="62" fill="#85d965"/><circle cx="98" cy="6" r="52" fill="#efefec"/><circle cx="98" cy="6" r="30" fill="#98ec6e"/>
<path d="M36 60 L100 100 L36 100Z" fill="#e9e9e6"/>
<path d="M-2 12 L102 76.500 L102 104 L84 100 L-2 47Z" fill="#ffd93b"/>
<path d="M-2 12 L102 76.500 L102 79 L-2 14.500Z" fill="#f6b73c"/><path d="M-2 45 L86 99.500 L84 101 L-2 47.500Z" fill="#f6b73c"/>
<path d="M0 46 L14.300 55 L14.300 100 L0 100Z" fill="#f6d3cb"/>
<rect x="0" y="0" width="14.300" height="12" fill="#eeeeec"/>
<rect x="12.500" y="0" width="2.500" height="100" fill="#c9c9c9" opacity="0.700"/><rect x="36" y="40" width="2" height="60" fill="#c9c9c9" opacity="0.600"/>
<rect x="14.300" y="0" width="21.700" height="100" fill="#ffffff"/>
<rect x="18.700" y="0" width="12.800" height="48" fill="#1b8ff0"/><rect x="18.700" y="0" width="12.800" height="20" fill="#189fef"/>
<circle cx="24.900" cy="59.200" r="17.200" fill="#fbfbfb" filter="url(#mpsh)"/><circle cx="24.900" cy="59.200" r="10.800" fill="#147fe6"/>
<g transform="translate(75.900 79)"><path d="M-18.300 -9.500 Q-14 -13 -9 -15 Q-4 -11.500 0 -14.800 Q4 -11.500 9 -15 Q14 -13 18.300 -9.500 C19.500 3 12 12.500 0 15.300 C-12 12.500 -19.500 3 -18.300 -9.500Z" fill="#fff" stroke="#1a70d8" stroke-width="0.700"/>
<path d="M-16.300 -8.700 Q-13 -11 -9.200 -12.600 Q-4 -9.300 0 -12.300 Q4 -9.300 9.200 -12.600 Q13 -11 16.300 -8.700 Q16.200 -6.500 15.900 -4.800 L-15.900 -4.800 Q-16.200 -6.500 -16.300 -8.700Z" fill="#ee3a30"/>
<path d="M-16.300 -3.300 L16.300 -3.300 C15.500 5 9.500 11 0 13.400 C-9.500 11 -15.500 5 -16.300 -3.300Z" fill="#1a70d8"/>
<text x="0" y="8.200" text-anchor="middle" font-family="Liberation Sans,sans-serif" font-weight="bold" font-size="11.500" fill="#fff">280</text></g>
</g></svg>
<svg class="abs ic" style="left:1216.7px;top:1494px" width="105" height="100" viewBox="0 0 105 100" ><defs><clipPath id="cct"><circle cx="52.300" cy="49.800" r="30.800"/></clipPath><linearGradient id="ctb" x1="0" y1="0" x2="0" y2="1"><stop offset="0" stop-color="#b68c53"/><stop offset="1" stop-color="#a87d45"/></linearGradient></defs>
<rect x="92" y="15.800" width="12" height="19" rx="3" fill="#c6c6c8"/><rect x="92" y="33.500" width="12" height="20.500" rx="2" fill="#4fbcf7"/><rect x="92" y="53" width="12" height="18" rx="2" fill="#f5900f"/><rect x="92" y="70" width="12" height="18" rx="3" fill="#52d45e"/>
<rect width="99.600" height="99" rx="22" fill="url(#ctb)"/>
<path d="M0 22 A22 22 0 0 1 6 6.500 L6 92.500 A22 22 0 0 1 0 77Z" fill="#9b7440" opacity="0.800"/>
<circle cx="52.300" cy="49.800" r="31.400" fill="none" stroke="#93703c" stroke-width="1.400"/>
<circle cx="52.300" cy="43" r="10.500" fill="#9a7540"/>
<ellipse cx="52.300" cy="75" rx="25" ry="14.500" fill="#9a7540" clip-path="url(#cct)"/></svg>
<svg class="abs ic" style="left:1340.4px;top:1492.7px" width="100" height="100" viewBox="0 0 100 100" ><defs><linearGradient id="mlb" x1="0" y1="0" x2="0" y2="1"><stop offset="0" stop-color="#1e7ff6"/><stop offset="1" stop-color="#18c4fc"/></linearGradient><linearGradient id="mle" x1="0" y1="0" x2="0" y2="1"><stop offset="0" stop-color="#f7f7f7"/><stop offset="1" stop-color="#dedede"/></linearGradient><filter id="mlsh" x="-20%" y="-20%" width="140%" height="160%"><feDropShadow dx="0" dy="2.500" stdDeviation="2" flood-color="#0a4a9a" flood-opacity="0.550"/></filter><clipPath id="cml"><rect x="14.800" y="27.300" width="70.500" height="45.400" rx="3.500"/></clipPath></defs>
<rect width="100" height="100" rx="22.500" fill="url(#mlb)"/>
<rect x="14.800" y="27.300" width="70.500" height="45.400" rx="3.500" fill="url(#mle)" filter="url(#mlsh)"/>
<g clip-path="url(#cml)" fill="none" stroke-linecap="round"><path d="M14.800 72.700 L37 50.500 M85.300 72.700 L63 50.500" stroke="#b9b9b9" stroke-width="1.500"/><path d="M14.300 27.800 L44 55.500 Q50 61 56 55.500 L85.800 27.800" stroke="#a9a9a9" stroke-width="1.800"/><path d="M15 27.300 L44 54 Q50 59.500 56 54 L85 27.300Z" fill="#f4f4f4" stroke="none"/></g></svg>
<svg class="abs ic" style="left:1464.0px;top:1492.3px" width="100" height="100" viewBox="0 0 100 100" ><defs><linearGradient id="pcb" x1="0" y1="0" x2="0" y2="1"><stop offset="0" stop-color="#cb6bee"/><stop offset="0.500" stop-color="#a040d4"/><stop offset="1" stop-color="#7222b2"/></linearGradient></defs>
<rect width="100" height="100" rx="22.500" fill="url(#pcb)"/>
<g fill="none" stroke="#fff" stroke-width="3.600" stroke-linecap="butt"><path d="M37.92,79.46 A33.7,33.7 0 1 1 62.08,79.46"/><path d="M35.99,64.70 A21.8,21.8 0 1 1 64.01,64.70"/></g>
<circle cx="50" cy="44.500" r="8.500" fill="#fff"/>
<path d="M50 56 C57 56 59 59 58.600 63.500 L56.300 84.500 C55.800 88.500 53.500 89.800 50 89.800 C46.500 89.800 44.200 88.500 43.700 84.500 L41.400 63.500 C41 59 43 56 50 56Z" fill="#fff"/></svg>
<svg class="abs ic" style="left:1641.4px;top:1493.5px" width="100" height="100" viewBox="0 0 100 100" ><defs><linearGradient id="rmb" x1="0" y1="0" x2="0" y2="1"><stop offset="0" stop-color="#ffffff"/><stop offset="1" stop-color="#f0efed"/></linearGradient></defs><rect width="100" height="100" rx="22.500" fill="url(#rmb)"/><circle cx="19.800" cy="25.2" r="7.700" fill="#fff" stroke="#1d82f2" stroke-width="1.700"/><circle cx="19.800" cy="25.2" r="4.900" fill="#1d82f2"/><rect x="37.900" y="24.2" width="51.700" height="2" rx="1" fill="#b5babd"/><circle cx="19.800" cy="50.4" r="7.700" fill="#fff" stroke="#e0483c" stroke-width="1.700"/><circle cx="19.800" cy="50.4" r="4.900" fill="#f2383a"/><rect x="37.900" y="49.4" width="51.700" height="2" rx="1" fill="#b5babd"/><circle cx="19.800" cy="75.4" r="7.700" fill="#fff" stroke="#f0a020" stroke-width="1.700"/><circle cx="19.800" cy="75.4" r="4.900" fill="#f29100"/><rect x="37.900" y="74.4" width="51.700" height="2" rx="1" fill="#b5babd"/></svg>
<svg class="abs ic" style="left:1765.4px;top:1493.5px" width="100" height="100" viewBox="0 0 100 100" ><defs><clipPath id="cnt"><rect width="100" height="100" rx="22.500"/></clipPath><linearGradient id="nty" x1="0" y1="0" x2="0" y2="1"><stop offset="0" stop-color="#ffdc56"/><stop offset="1" stop-color="#ffbf0c"/></linearGradient><linearGradient id="ntp" x1="0" y1="0" x2="0" y2="1"><stop offset="0" stop-color="#f8f7f5"/><stop offset="1" stop-color="#e9e6e1"/></linearGradient></defs>
<g clip-path="url(#cnt)"><rect width="100" height="100" fill="url(#ntp)"/><rect width="100" height="26" fill="url(#nty)"/><rect y="26" width="100" height="1.800" fill="#b9b4a4" opacity="0.800"/><rect y="27.800" width="100" height="1.200" fill="#dddcd8"/><circle cx="3.80" cy="30.900" r="0.900" fill="#c4c4c2"/><circle cx="8.02" cy="30.900" r="0.900" fill="#c4c4c2"/><circle cx="12.24" cy="30.900" r="0.900" fill="#c4c4c2"/><circle cx="16.46" cy="30.900" r="0.900" fill="#c4c4c2"/><circle cx="20.68" cy="30.900" r="0.900" fill="#c4c4c2"/><circle cx="24.90" cy="30.900" r="0.900" fill="#c4c4c2"/><circle cx="29.12" cy="30.900" r="0.900" fill="#c4c4c2"/><circle cx="33.34" cy="30.900" r="0.900" fill="#c4c4c2"/><circle cx="37.56" cy="30.900" r="0.900" fill="#c4c4c2"/><circle cx="41.78" cy="30.900" r="0.900" fill="#c4c4c2"/><circle cx="46.00" cy="30.900" r="0.900" fill="#c4c4c2"/><circle cx="50.22" cy="30.900" r="0.900" fill="#c4c4c2"/><circle cx="54.44" cy="30.900" r="0.900" fill="#c4c4c2"/><circle cx="58.66" cy="30.900" r="0.900" fill="#c4c4c2"/><circle cx="62.88" cy="30.900" r="0.900" fill="#c4c4c2"/><circle cx="67.10" cy="30.900" r="0.900" fill="#c4c4c2"/><circle cx="71.32" cy="30.900" r="0.900" fill="#c4c4c2"/><circle cx="75.54" cy="30.900" r="0.900" fill="#c4c4c2"/><circle cx="79.76" cy="30.900" r="0.900" fill="#c4c4c2"/><circle cx="83.98" cy="30.900" r="0.900" fill="#c4c4c2"/><circle cx="88.20" cy="30.900" r="0.900" fill="#c4c4c2"/><circle cx="92.42" cy="30.900" r="0.900" fill="#c4c4c2"/><circle cx="96.64" cy="30.900" r="0.900" fill="#c4c4c2"/>
<rect y="49.900" width="100" height="1.200" fill="#d3d3d1"/><rect y="74.600" width="100" height="1.200" fill="#d3d3d1"/></g></svg>
<svg class="abs ic" style="left:1943.3px;top:1493.6px" width="100" height="100" viewBox="0 0 100 100" ><defs><linearGradient id="spb" x1="0" y1="0" x2="0" y2="1"><stop offset="0" stop-color="#d3e0e9"/><stop offset="0.500" stop-color="#b9bec2"/><stop offset="1" stop-color="#8b8b8b"/></linearGradient><linearGradient id="spg" x1="0" y1="0" x2="0" y2="1"><stop offset="0" stop-color="#b8b8bb"/><stop offset="1" stop-color="#8c8c90"/></linearGradient></defs>
<rect width="100" height="100" rx="22.500" fill="url(#spb)"/>
<circle cx="50.3" cy="50" r="43.600" fill="#26262b"/>
<path d="M87.29,48.96 L92.60,49.49 L92.60,50.51 L87.29,51.04 L87.19,52.84 L92.42,53.92 L92.31,54.93 L86.97,54.90 L86.69,56.68 L91.78,58.30 L91.57,59.29 L86.26,58.70 L85.80,60.44 L90.68,62.59 L90.37,63.55 L85.16,62.41 L84.51,64.10 L89.15,66.74 L88.73,67.67 L83.67,65.99 L82.85,67.60 L87.18,70.71 L86.68,71.59 L81.81,69.39 L80.83,70.90 L84.82,74.45 L84.22,75.27 L79.61,72.58 L78.48,73.98 L82.07,77.92 L81.39,78.68 L77.09,75.52 L75.82,76.79 L78.98,81.09 L78.22,81.77 L74.28,78.18 L72.88,79.31 L75.57,83.92 L74.75,84.52 L71.20,80.53 L69.69,81.51 L71.89,86.38 L71.01,86.88 L67.90,82.55 L66.29,83.37 L67.97,88.43 L67.04,88.85 L64.40,84.21 L62.71,84.86 L63.85,90.07 L62.89,90.38 L60.74,85.50 L59.00,85.96 L59.59,91.27 L58.60,91.48 L56.98,86.39 L55.20,86.67 L55.23,92.01 L54.22,92.12 L53.14,86.89 L51.34,86.99 L50.81,92.30 L49.79,92.30 L49.26,86.99 L47.46,86.89 L46.38,92.12 L45.37,92.01 L45.40,86.67 L43.62,86.39 L42.00,91.48 L41.01,91.27 L41.60,85.96 L39.86,85.50 L37.71,90.38 L36.75,90.07 L37.89,84.86 L36.20,84.21 L33.56,88.85 L32.63,88.43 L34.31,83.37 L32.70,82.55 L29.59,86.88 L28.71,86.38 L30.91,81.51 L29.40,80.53 L25.85,84.52 L25.03,83.92 L27.72,79.31 L26.32,78.18 L22.38,81.77 L21.62,81.09 L24.78,76.79 L23.51,75.52 L19.21,78.68 L18.53,77.92 L22.12,73.98 L20.99,72.58 L16.38,75.27 L15.78,74.45 L19.77,70.90 L18.79,69.39 L13.92,71.59 L13.42,70.71 L17.75,67.60 L16.93,65.99 L11.87,67.67 L11.45,66.74 L16.09,64.10 L15.44,62.41 L10.23,63.55 L9.92,62.59 L14.80,60.44 L14.34,58.70 L9.03,59.29 L8.82,58.30 L13.91,56.68 L13.63,54.90 L8.29,54.93 L8.18,53.92 L13.41,52.84 L13.31,51.04 L8.00,50.51 L8.00,49.49 L13.31,48.96 L13.41,47.16 L8.18,46.08 L8.29,45.07 L13.63,45.10 L13.91,43.32 L8.82,41.70 L9.03,40.71 L14.34,41.30 L14.80,39.56 L9.92,37.41 L10.23,36.45 L15.44,37.59 L16.09,35.90 L11.45,33.26 L11.87,32.33 L16.93,34.01 L17.75,32.40 L13.42,29.29 L13.92,28.41 L18.79,30.61 L19.77,29.10 L15.78,25.55 L16.38,24.73 L20.99,27.42 L22.12,26.02 L18.53,22.08 L19.21,21.32 L23.51,24.48 L24.78,23.21 L21.62,18.91 L22.38,18.23 L26.32,21.82 L27.72,20.69 L25.03,16.08 L25.85,15.48 L29.40,19.47 L30.91,18.49 L28.71,13.62 L29.59,13.12 L32.70,17.45 L34.31,16.63 L32.63,11.57 L33.56,11.15 L36.20,15.79 L37.89,15.14 L36.75,9.93 L37.71,9.62 L39.86,14.50 L41.60,14.04 L41.01,8.73 L42.00,8.52 L43.62,13.61 L45.40,13.33 L45.37,7.99 L46.38,7.88 L47.46,13.11 L49.26,13.01 L49.79,7.70 L50.81,7.70 L51.34,13.01 L53.14,13.11 L54.22,7.88 L55.23,7.99 L55.20,13.33 L56.98,13.61 L58.60,8.52 L59.59,8.73 L59.00,14.04 L60.74,14.50 L62.89,9.62 L63.85,9.93 L62.71,15.14 L64.40,15.79 L67.04,11.15 L67.97,11.57 L66.29,16.63 L67.90,17.45 L71.01,13.12 L71.89,13.62 L69.69,18.49 L71.20,19.47 L74.75,15.48 L75.57,16.08 L72.88,20.69 L74.28,21.82 L78.22,18.23 L78.98,18.91 L75.82,23.21 L77.09,24.48 L81.39,21.32 L82.07,22.08 L78.48,26.02 L79.61,27.42 L84.22,24.73 L84.82,25.55 L80.83,29.10 L81.81,30.61 L86.68,28.41 L87.18,29.29 L82.85,32.40 L83.67,34.01 L88.73,32.33 L89.15,33.26 L84.51,35.90 L85.16,37.59 L90.37,36.45 L90.68,37.41 L85.80,39.56 L86.26,41.30 L91.57,40.71 L91.78,41.70 L86.69,43.32 L86.97,45.10 L92.31,45.07 L92.42,46.08 L87.19,47.16Z" fill="#8e8e92"/>
<circle cx="50.3" cy="50" r="37.500" fill="url(#spg)"/>
<circle cx="50.3" cy="50" r="31" fill="#2c2c31"/>
<path d="M74.78,49.14 L78.80,49.57 L78.80,50.43 L74.78,50.86 L74.69,52.35 L78.61,53.30 L78.50,54.14 L74.46,54.05 L74.17,55.51 L77.94,56.96 L77.72,57.79 L73.73,57.17 L73.25,58.58 L76.79,60.51 L76.46,61.30 L72.59,60.16 L71.93,61.50 L75.19,63.88 L74.77,64.62 L71.08,62.98 L70.25,64.23 L73.17,67.01 L72.65,67.69 L69.20,65.59 L68.22,66.71 L70.75,69.85 L70.15,70.45 L67.01,67.92 L65.89,68.90 L67.99,72.35 L67.31,72.87 L64.53,69.95 L63.28,70.78 L64.92,74.47 L64.18,74.89 L61.80,71.63 L60.46,72.29 L61.60,76.16 L60.81,76.49 L58.88,72.95 L57.47,73.43 L58.09,77.42 L57.26,77.64 L55.81,73.87 L54.35,74.16 L54.44,78.20 L53.60,78.31 L52.65,74.39 L51.16,74.48 L50.73,78.50 L49.87,78.50 L49.44,74.48 L47.95,74.39 L47.00,78.31 L46.16,78.20 L46.25,74.16 L44.79,73.87 L43.34,77.64 L42.51,77.42 L43.13,73.43 L41.72,72.95 L39.79,76.49 L39.00,76.16 L40.14,72.29 L38.80,71.63 L36.42,74.89 L35.68,74.47 L37.32,70.78 L36.07,69.95 L33.29,72.87 L32.61,72.35 L34.71,68.90 L33.59,67.92 L30.45,70.45 L29.85,69.85 L32.38,66.71 L31.40,65.59 L27.95,67.69 L27.43,67.01 L30.35,64.23 L29.52,62.98 L25.83,64.62 L25.41,63.88 L28.67,61.50 L28.01,60.16 L24.14,61.30 L23.81,60.51 L27.35,58.58 L26.87,57.17 L22.88,57.79 L22.66,56.96 L26.43,55.51 L26.14,54.05 L22.10,54.14 L21.99,53.30 L25.91,52.35 L25.82,50.86 L21.80,50.43 L21.80,49.57 L25.82,49.14 L25.91,47.65 L21.99,46.70 L22.10,45.86 L26.14,45.95 L26.43,44.49 L22.66,43.04 L22.88,42.21 L26.87,42.83 L27.35,41.42 L23.81,39.49 L24.14,38.70 L28.01,39.84 L28.67,38.50 L25.41,36.12 L25.83,35.38 L29.52,37.02 L30.35,35.77 L27.43,32.99 L27.95,32.31 L31.40,34.41 L32.38,33.29 L29.85,30.15 L30.45,29.55 L33.59,32.08 L34.71,31.10 L32.61,27.65 L33.29,27.13 L36.07,30.05 L37.32,29.22 L35.68,25.53 L36.42,25.11 L38.80,28.37 L40.14,27.71 L39.00,23.84 L39.79,23.51 L41.72,27.05 L43.13,26.57 L42.51,22.58 L43.34,22.36 L44.79,26.13 L46.25,25.84 L46.16,21.80 L47.00,21.69 L47.95,25.61 L49.44,25.52 L49.87,21.50 L50.73,21.50 L51.16,25.52 L52.65,25.61 L53.60,21.69 L54.44,21.80 L54.35,25.84 L55.81,26.13 L57.26,22.36 L58.09,22.58 L57.47,26.57 L58.88,27.05 L60.81,23.51 L61.60,23.84 L60.46,27.71 L61.80,28.37 L64.18,25.11 L64.92,25.53 L63.28,29.22 L64.53,30.05 L67.31,27.13 L67.99,27.65 L65.89,31.10 L67.01,32.08 L70.15,29.55 L70.75,30.15 L68.22,33.29 L69.20,34.41 L72.65,32.31 L73.17,32.99 L70.25,35.77 L71.08,37.02 L74.77,35.38 L75.19,36.12 L71.93,38.50 L72.59,39.84 L76.46,38.70 L76.79,39.49 L73.25,41.42 L73.73,42.83 L77.72,42.21 L77.94,43.04 L74.17,44.49 L74.46,45.95 L78.50,45.86 L78.61,46.70 L74.69,47.65Z" fill="#77777c"/>
<circle cx="50.3" cy="50" r="25" fill="#8a8a8f"/>
<circle cx="50.3" cy="50" r="20.500" fill="#5b5b64"/>
<path d="M50.3,50 L82.30,50.00" stroke="#a3a3a6" stroke-width="4.200" stroke-linecap="butt"/><path d="M50.3,50 L34.30,77.71" stroke="#a3a3a6" stroke-width="4.200" stroke-linecap="butt"/><path d="M50.3,50 L34.30,22.29" stroke="#a3a3a6" stroke-width="4.200" stroke-linecap="butt"/>
<circle cx="50.3" cy="50" r="2.200" fill="#9d9da0"/><circle cx="50.3" cy="50" r="1" fill="#3a3a40"/></svg>
<svg class="abs ic" style="left:2072.6px;top:1489px" width="90" height="111" viewBox="0 0 90 111" ><defs><linearGradient id="trb" x1="0" y1="0" x2="1" y2="0"><stop offset="0" stop-color="#f3f3f5"/><stop offset="0.120" stop-color="#e9eaec"/><stop offset="0.700" stop-color="#e2e3e6"/><stop offset="0.930" stop-color="#f8f8fa"/><stop offset="1" stop-color="#eeeeef"/></linearGradient><linearGradient id="tri" x1="0" y1="0" x2="0" y2="1"><stop offset="0" stop-color="#e3b2f2"/><stop offset="1" stop-color="#e8c8f0"/></linearGradient><radialGradient id="trg" cx="0.300" cy="1" r="0.400"><stop offset="0" stop-color="#ffffff" stop-opacity="0.900"/><stop offset="1" stop-color="#ffffff" stop-opacity="0"/></radialGradient></defs>
<path d="M0.500 11.500 C0.500 -3 88.500 -3 88.500 11.500 L78.500 99 C77.500 112.500 13.500 112.500 12.500 99Z" fill="url(#trb)"/>
<path d="M0.500 11.500 C0.500 -3 88.500 -3 88.500 11.500 L78.500 99 C77.500 112.500 13.500 112.500 12.500 99Z" fill="url(#trg)"/>
<ellipse cx="44.500" cy="11.300" rx="42.500" ry="9.800" fill="url(#tri)"/>
<path d="M2 11.300 A42.500 9.800 0 0 0 87 11.300 A42.500 11.300 0 0 1 2 11.300Z" fill="#f4f4f6" opacity="0.900"/></svg>
<div class="abs" style="left:644px;top:1603.3px;width:8px;height:8px;border-radius:50%;background:#1d1d1f"></div>
<div class="abs" style="left:768px;top:1603.3px;width:8px;height:8px;border-radius:50%;background:#1d1d1f"></div>
<div class="abs" style="left:892px;top:1603.3px;width:8px;height:8px;border-radius:50%;background:#1d1d1f"></div>
<div class="abs" style="left:1015.5px;top:1603.3px;width:8px;height:8px;border-radius:50%;background:#1d1d1f"></div>
<div class="abs" style="left:1139px;top:1603.3px;width:8px;height:8px;border-radius:50%;background:#1d1d1f"></div>
<div class="abs" style="left:1263px;top:1603.3px;width:8px;height:8px;border-radius:50%;background:#1d1d1f"></div>
<div class="abs" style="left:1387px;top:1603.3px;width:8px;height:8px;border-radius:50%;background:#1d1d1f"></div>
<div class="abs" style="left:1511px;top:1603.3px;width:8px;height:8px;border-radius:50%;background:#1d1d1f"></div>
<div class="abs" style="left:1688px;top:1603.3px;width:8px;height:8px;border-radius:50%;background:#1d1d1f"></div>
<div class="abs" style="left:1812px;top:1603.3px;width:8px;height:8px;border-radius:50%;background:#1d1d1f"></div>
<div class="abs" style="left:1989.7px;top:1603.3px;width:8px;height:8px;border-radius:50%;background:#1d1d1f"></div>
<div class="abs" style="left:2113.6px;top:1603.3px;width:8px;height:8px;border-radius:50%;background:#1d1d1f"></div>
</div></div></body></html>
